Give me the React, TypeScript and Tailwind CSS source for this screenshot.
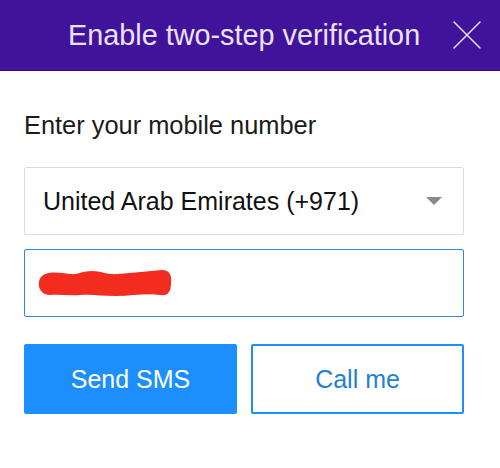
export default function App() {
  return (
    <div className="h-[468px] w-[500px] overflow-hidden bg-white font-['Liberation_Sans',Arial,sans-serif]">
      <div className="flex h-[71px] items-center border-b border-[#2e0a78] bg-[#40139a]">
        <h1 className="ml-[68px] text-[28.8px] leading-none text-[#ece2ff]">
          Enable two-step verification
        </h1>
        <button type="button" aria-label="Close" className="ml-auto mr-[19px] text-[#ece2ff]">
          <svg viewBox="0 0 28 28" className="h-[28px] w-[28px]" fill="none" stroke="currentColor" strokeWidth={1.5} strokeLinecap="round">
            <path d="M1 1l26 26M27 1L1 27" />
          </svg>
        </button>
      </div>

      <div className="ml-[24px] w-[440px] pt-[42px]">
        <p className="text-[25.4px] leading-none text-[#1a1a1a]">Enter your mobile number</p>

        <div className="mt-[29px] flex h-[68px] items-center rounded-[2px] border border-[#dedede] pl-[18px] pr-[21px]">
          <span className="text-[25px] text-[#111]">United Arab Emirates (+971)</span>
          <svg viewBox="0 0 16 8" className="ml-auto h-[8px] w-[16px]">
            <path d="M0 0h16L8 8z" fill="#8a8a8a" />
          </svg>
        </div>

        <div className="mt-[14px] flex h-[68px] items-center rounded-[2px] border border-[#2a8ae6] pl-[11px]">
          <svg viewBox="0 0 136 30" className="h-[30px] w-[136px]">
            <path
              d="M5 9 C12 2 24 5 34 6 C42 7 46 3 56 3 C66 3 70 7 82 6 C98 5 112 3 126 2 C134 2 136 8 135 15 C135 24 132 28 124 27 C110 25 96 28 80 28 C66 28 56 26 44 27 C34 28 24 26 14 27 C4 27 0 16 5 9 Z"
              fill="#f42b1f"
            />
          </svg>
        </div>

        <div className="mt-[27px] grid grid-cols-2 gap-[14px]">
          <button type="button" className="h-[70px] rounded-[2px] bg-[#1c8ffc] text-[25px] text-white">
            Send SMS
          </button>
          <button type="button" className="h-[70px] rounded-[2px] border-2 border-[#1c8ffc] bg-white text-[25px] text-[#1f7fd8]">
            Call me
          </button>
        </div>
      </div>
    </div>
  );
}
